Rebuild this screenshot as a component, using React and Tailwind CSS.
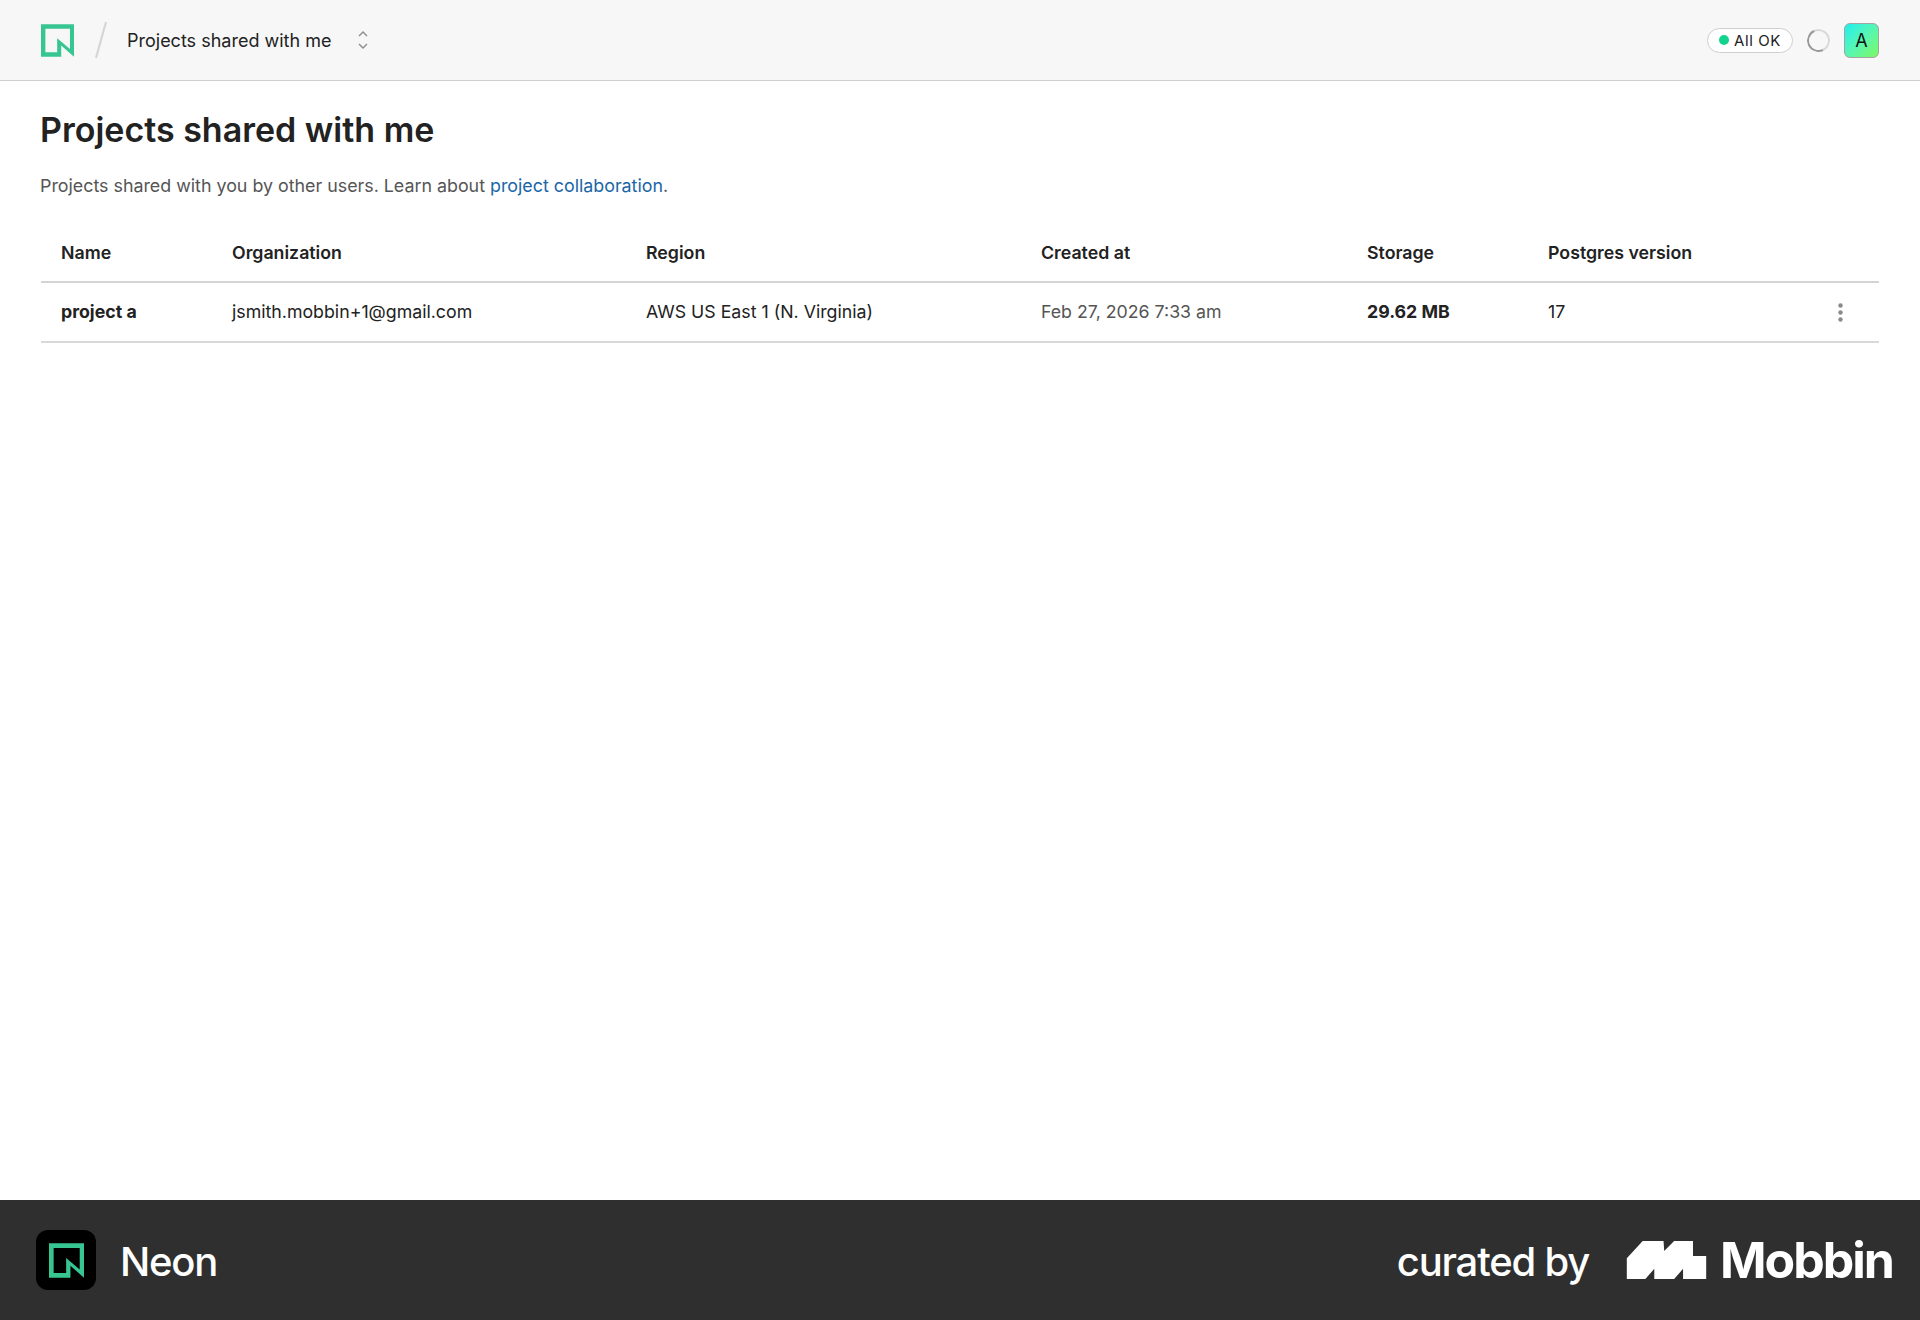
import React from "react";

function NeonMark({ className }) {
  return (
    <svg viewBox="0 0 98 96" className={className}>
      <path
        fillRule="evenodd"
        fill="#37c591"
        d="M0 0H98V96L60 63V96H0ZM13 13V83H48V41L86 73V13Z"
      />
    </svg>
  );
}

function MobbinMark() {
  return (
    <svg viewBox="0 0 80 38.3" className="w-[81px] h-[38px] shrink-0">
      <path
        fill="#fff"
        d="M0 17.3L16 0H37L37.7 10L47.7 0H66.7V15H80V38.3H56.7V28L47.7 38.3H27.7V28L18.7 38.3H0Z"
      />
    </svg>
  );
}

const columns = "grid grid-cols-[171px_414px_395px_326px_181px_1fr] pl-[20px] pr-[36px] items-center";

export default function App() {
  return (
    <div className="w-[1920px] h-[1320px] flex flex-col bg-white font-['Inter',sans-serif] text-[#222]">
      <header className="h-[81px] shrink-0 flex items-center pl-[41px] pr-[41px] bg-[#f7f7f7] border-b border-[#cfcfcf]">
        <NeonMark className="w-[33px] h-[33px] shrink-0" />
        <svg viewBox="0 0 12 38" className="w-[12px] h-[38px] ml-[21px] shrink-0">
          <path d="M11 1L1 37" stroke="#d6d6d6" strokeWidth="2.2" fill="none" />
        </svg>
        <span className="ml-[20px] mt-[1px] text-[18px] text-[#222]">Projects shared with me</span>
        <svg viewBox="0 0 12 20" className="w-[12px] h-[20px] ml-[26px] shrink-0">
          <path d="M2 6L6 2L10 6M2 14L6 18L10 14" stroke="#8c8c8c" strokeWidth="1.4" fill="none" />
        </svg>
        <div className="ml-auto flex items-center">
          <div className="flex items-center h-[25px] w-[86px] pl-[11px] rounded-full border border-[#cfcfcf] bg-white">
            <span className="w-[10px] h-[10px] rounded-full bg-[#12d48f]" />
            <span className="ml-[5px] text-[15px] tracking-[0.04em] leading-none text-[#222]">All OK</span>
          </div>
          <div className="ml-[14px] w-[23px] h-[23px] rounded-full border-2 border-[#999] border-t-[#d8d8d8] border-r-[#d8d8d8] rotate-[20deg]" />
          <div className="ml-[14px] w-[35px] h-[35px] rounded-[6px] border border-[#a3a3a3] bg-gradient-to-br from-[#12f0f0] to-[#7cf95c] flex items-center justify-center text-[18px] text-[#111]">
            A
          </div>
        </div>
      </header>

      <main className="flex-1 px-[41px]">
        <h1 className="mt-[29px] -ml-[1px] text-[34px] leading-[40px] font-semibold text-[#222]">Projects shared with me</h1>
        <p className="mt-[24px] -ml-[1px] text-[17.83px] leading-[24px] text-[#555]">
          Projects shared with you by other users. Learn about{" "}
          <a className="text-[#1a66a8]">project collaboration</a>.
        </p>
        <div className={`${columns} mt-[28px] h-[57px] border-b-2 border-[#d4d4d4] text-[17.75px] font-semibold text-[#222]`}>
          <div>Name</div>
          <div>Organization</div>
          <div>Region</div>
          <div>Created at</div>
          <div>Storage</div>
          <div>Postgres version</div>
        </div>
        <div className={`${columns} h-[60px] border-b-2 border-[#d9d9d9] text-[17.75px] text-[#222]`}>
          <div className="font-bold">project a</div>
          <div>jsmith.mobbin+1@gmail.com</div>
          <div>AWS US East 1 (N. Virginia)</div>
          <div className="text-[#555]">Feb 27, 2026 7:33 am</div>
          <div className="font-bold">29.62 MB</div>
          <div className="flex items-center justify-between">
            <span>17</span>
            <svg viewBox="0 0 5 19" className="w-[5px] h-[19px]">
              <circle cx="2.5" cy="2.5" r="2.2" fill="#8a8a8a" />
              <circle cx="2.5" cy="9.5" r="2.2" fill="#8a8a8a" />
              <circle cx="2.5" cy="16.5" r="2.2" fill="#8a8a8a" />
            </svg>
          </div>
        </div>
      </main>

      <footer className="h-[120px] shrink-0 flex items-center bg-[#2f2f2f] pl-[36px] pr-[27px] text-white">
        <div className="w-[60px] h-[60px] rounded-[12px] bg-black flex items-center justify-center">
          <NeonMark className="w-[35px] h-[35px]" />
        </div>
        <span className="ml-[24px] mt-[3px] text-[40px] font-medium tracking-[-0.03em]">Neon</span>
        <span className="ml-auto mt-[3px] text-[40px] font-medium tracking-[-0.03em]">curated by</span>
        <div className="ml-[37px] flex items-center">
          <MobbinMark />
          <span className="ml-[13px] text-[50px] leading-none font-bold tracking-[-0.04em]">Mobbin</span>
        </div>
      </footer>
    </div>
  );
}
